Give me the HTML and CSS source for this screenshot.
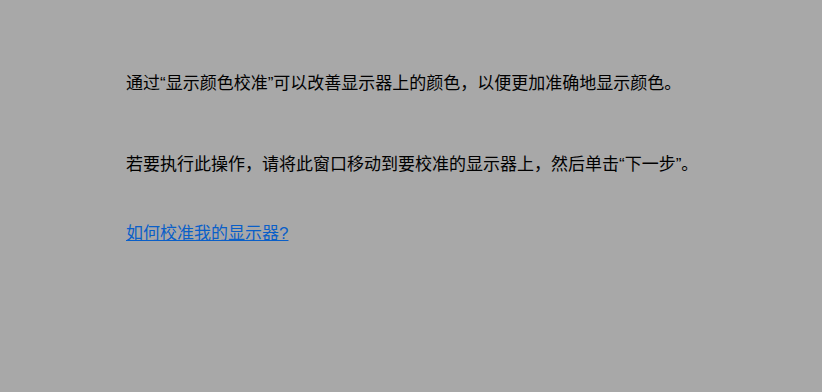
FILE: index.html
```html
<!DOCTYPE html>
<html lang="zh-CN">
<head>
<meta charset="utf-8">
<link rel="stylesheet" href="styles.css">
</head>
<body>
<main class="page">
  <p class="intro">通过“显示颜色校准”可以改善显示器上的颜色，以便更加准确地显示颜色。</p>
  <p class="instr">若要执行此操作，请将此窗口移动到要校准的显示器上，然后单击“下一步”。</p>
  <a class="help" href="#">如何校准我的显示器?</a>
</main>
</body>
</html>
```
FILE: styles.css
```css
html, body {
  margin: 0;
  padding: 0;
  background: #a8a8a8;
  width: 822px;
  height: 392px;
  overflow: hidden;
}
.page {
  padding: 72px 0 0 126px;
  font-family: "Liberation Sans", "Noto Sans CJK SC", sans-serif;
  font-size: 17px;
  line-height: 24px;
  color: #000;
}
.intro {
  margin: 0;
}
.instr {
  margin: 57px 0 0;
}
.help {
  display: inline-block;
  margin-top: 45px;
  color: #0a5fc8;
  text-decoration: underline;
}
```
